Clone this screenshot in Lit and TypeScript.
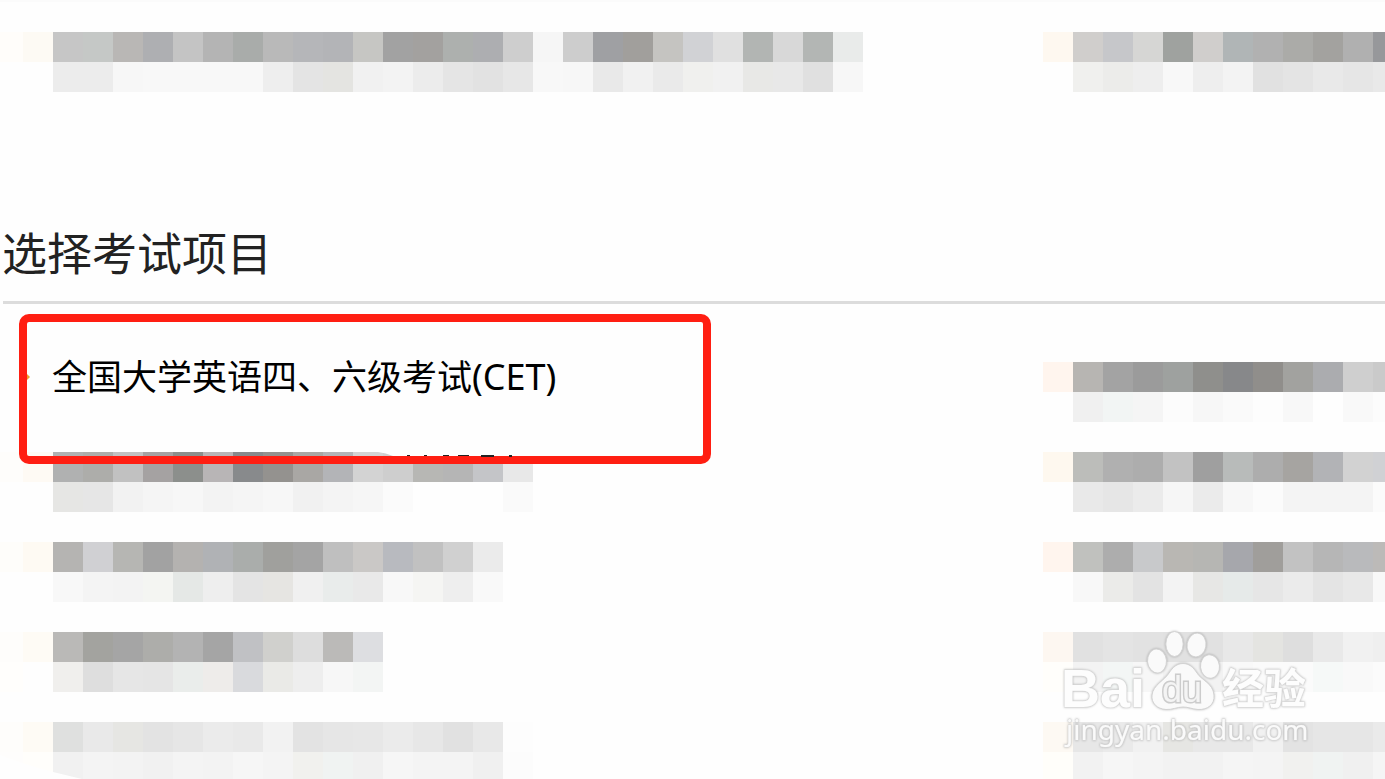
import { LitElement, html, css } from "lit";
import { customElement, property } from "lit/decorators.js";

interface Mosaic {
  top: string;
  bottom: string;
}

const BLANK = "fefefe";

const headerLeft: Mosaic = {
  top: "fffdfa fdfaf4 c6c6c6 c5c8c6 b9b7b5 aeafb2 c4c4c4 b4b4b4 a9acaa b9b9b9 b5b6b9 b3b4b7 c6c6c3 a2a2a2 a3a19f adb0ae adaeb1 cecece f6f6f6 cdcdcd 9fa0a3 a19f9c c5c4c1 d1d2d5 e0e0e0 b2b5b3 d8d8d8 b3b6b4 e9ebea",
  bottom:
    "fefefe fefefe ececec ececec f7f7f7 f8f8f8 f8f8f8 f8f8f8 f8f8f8 eeeeee e4e4e4 e4e4e1 f1f1f1 f3f3f3 ececec e5e5e5 e2e2e2 e7e7e7 f8f8f8 f7f7f7 e9e9e9 f1f1f1 eaeaea f0f0ee f1f1f1 e8e8e6 e8e8e8 e0e0e0 f7f7f7",
};

const headerRight: Mosaic = {
  top: "fef8f0 d0cecc c6c7ca d6d6d4 9fa29f d0cecc b0b5b6 b1b1b1 ababa8 a3a29f b0b0b0 97989b",
  bottom: "fefefe f0f0ee ececea eeeeee f8f8f8 eeeeee f3f3f3 e1e1e1 e4e4e4 e9e9e9 e6e6e6 e9e9e9",
};

const leftRows: Mosaic[] = [
  {
    top: "fefdfb fefaf4 b0b1b1 adadaa c1c1c1 a5a2a2 8c8f8c b8b5b6 888a8c 94928f a9a7a4 b3b4b7 d3d3d3 cecece b7b7b4 b5b5b5 c4c5c8 e8e8e8",
    bottom:
      "fefefe fefefe e6e6e4 e6e6e6 f2f2f2 f5f5f5 f7f7f7 f3f3f3 f5f5f5 f7f7f7 f1f1f1 f4f4f4 f6f6f6 fbfbfb fefefe fefefe fefefe fafafa",
  },
  {
    top: "fefdfa fefaf3 b5b4b2 d0d0d3 b6b6b3 a2a2a2 b4b2b0 b0b2b5 aaadab a0a09d a4a4a4 bfbfbf cac8c6 b8babf c1c1c1 d0d0d0 ebebeb",
    bottom:
      "fefefe fefefe f8f8f8 f4f4f4 f3f3f3 f4f5f2 e5e8e6 eeeeee e4e4e4 e6e5e2 f0f0f0 e9eceb e9e9e9 f8f8f8 f5f5f3 eeeeee f9f9f9",
  },
  {
    top: "fefdfb fefbf5 bab9b7 a3a39f a5a5a5 adadaa b3b3b3 a5a5a5 c0c1c4 d0d0cd dddddd bbbab8 dddee1",
    bottom:
      "fffefc fefefe f0efed dedede e6e6e6 e5e5e5 eaedeb eeecea d9dadd eaeae7 eeeeee f7f7f7 f3f5f4",
  },
  {
    top: "fefdfb fefbf5 dfe0df e9e9e9 e6e6e3 e3e3e3 e6e6e6 ebebeb e9e9e9 f2f2f2 e3e3e3 e6e6e6 e7e7e7 ebebeb e7e7e7 e1e1e1 e8e8e8 fdfdfd",
    bottom:
      "fefdfc fffefb f1f1f1 f4f4f4 f3f3f3 f1f1f1 f4f4f4 f3f3f3 f6f6f6 f4f4f4 f1f1ee f0f3f2 f0f0f0 f6f6f6 f4f4f4 f4f4f4 f0f0f0 fcfcfc",
  },
];

const rightRows: Mosaic[] = [
  {
    top: "fff5ee b7b5b2 a3a3a3 9b9b9b 9ea19f 8f8f8c 87888a 908e8b a2a29f abacaf cfcfcf cacaca",
    bottom: "fefefe f0f0f0 f2f5f4 f5f5f5 fcfcfc f7f7f7 fafafa fdfdfd f8f8f8 fefefe f9f9f9 fcfcfc",
  },
  {
    top: "fef8ef bcbdba b0b0b0 adadad c2c2c2 9f9f9f b8bbba adadad a6a4a1 b2b3b6 d2d2d2 d0d1d4",
    bottom: "fefefe e9e9e9 e6e6e6 ebebeb f6f6f6 ebebeb f7f7f7 fbfbfb f4f4f4 f4f4f4 f4f4f4 fbfbfb",
  },
  {
    top: "fff5ee c0c1be adadad c8c9cb b9b7b3 b6b6b3 a6a7ac a09e9b c2c2c2 b6b6b6 b9babc bcbab8",
    bottom: "fefefe f8f8f8 ebebe9 e3e3e3 f3f3f3 e7e7e5 e6eae9 e6e6e6 ebebeb e4e4e4 e8e8e8 f8f8f8",
  },
  {
    top: "fdf7f1 e1e1e1 e4e4e4 e2e2e2 e1e1e1 e1e1e1 e8e8e8 e4e4e1 dedede e9e9e9 f1f1f1 efefef",
    bottom: "fffefb f3f3f3 f3f6f5 f7f7f7 f2f2f2 f2f2f2 f9f9f9 fbfbfb fbfbfb f6f9f8 f9f9f9 fbfbfb",
  },
  {
    top: "fdf9f3 e7e7e7 eaeaea f1f1f1 e6e6e3 e8e8e8 e8e8e8 f1f1f1 e3e3e3 e6e6e6 e6e6e6 eaeaea",
    bottom: "fffefa f2f2f2 f6f6f6 f4f4f4 f2f2f2 f2f2f2 f5f5f5 f4f4f4 f1f1ef f0f3f2 f0f0f0 f5f5f5",
  },
];

/** A redacted entry: two strips of flat 30px tiles. */
@customElement("mosaic-entry")
class MosaicEntry extends LitElement {
  @property({ attribute: false }) data: Mosaic = { top: BLANK, bottom: BLANK };
  @property({ type: Boolean, reflect: true }) narrow = false;

  static styles = css`
    :host {
      display: block;
      overflow: hidden;
    }
    .strip {
      display: flex;
      height: 30px;
    }
    .tile {
      flex: 0 0 30px;
    }
    :host([narrow]) .tile:first-child {
      flex-basis: 23px;
    }
  `;

  private strip(colours: string) {
    return html`<div class="strip">
      ${colours
        .split(" ")
        .map((c) => html`<span class="tile" style="background:#${c}"></span>`)}
    </div>`;
  }

  render() {
    return html`${this.strip(this.data.top)}${this.strip(this.data.bottom)}`;
  }
}

/** Translucent site mark in the lower right corner. */
@customElement("site-mark")
class SiteMark extends LitElement {
  static styles = css`
    :host {
      display: block;
    }
    svg {
      display: block;
      overflow: visible;
      filter: drop-shadow(0 0 1px rgba(0, 0, 0, 0.25));
    }
    .shape {
      fill: #fafafa;
      stroke: #d2d2d2;
      stroke-width: 1;
    }
    text {
      fill: #fdfdfd;
      stroke: #d8d8d8;
      stroke-width: 1px;
      paint-order: stroke;
    }
    .brand {
      font: 700 54px "Liberation Sans", sans-serif;
    }
    .inner {
      font: 400 36px "Liberation Sans", sans-serif;
      fill: #f4f4f4;
      stroke: #cccccc;
      stroke-width: 3px;
    }
    .han {
      font: 700 42px "Noto Sans CJK SC", sans-serif;
    }
    .domain {
      font: 400 28px "Noto Sans", sans-serif;
      fill: #fafafa;
      stroke: #dadada;
    }
  `;

  render() {
    return html`<svg width="250" height="124" viewBox="0 0 250 124" role="img" aria-label="Baidu 经验">
      <text class="brand" x="-1" y="78">Bai</text>
      <ellipse class="shape" cx="95" cy="32" rx="9.5" ry="12" transform="rotate(-4 95 32)" />
      <ellipse class="shape" cx="112.500" cy="15" rx="8.700" ry="12.500" />
      <ellipse class="shape" cx="134.500" cy="16" rx="9.500" ry="12" transform="rotate(9 134.5 16)" />
      <ellipse class="shape" cx="148" cy="37.500" rx="9.500" ry="11.800" transform="rotate(-6 148 37.5)" />
      <path
        class="shape"
        d="M121 34.500 C127 34.500 131 38 135 44 C139 51 151 54 152 66 C153 76 145 81 136 80.500 C130 80 126 78 121 78 C115 78 110 81 104 80.500 C95 80 89 74 90 66 C91 56 103 51 107 44 C111 38 115 34.500 121 34.500 Z"
      />
      <text class="inner" x="100" y="73">du</text>
      <text class="han" x="160" y="75">经验</text>
      <text class="domain" x="4" y="111">jingyan.baidu.com</text>
    </svg>`;
  }
}

@customElement("app-root")
class AppRoot extends LitElement {
  static styles = css`
    :host {
      display: block;
      position: relative;
      height: 100vh;
      overflow: hidden;
      background: #fefefe;
      border-top: 2px solid #fbfbfb;
      box-sizing: border-box;
      font-family: "Noto Sans", "Noto Sans CJK SC", sans-serif;
    }
    .columns {
      display: grid;
      grid-template-columns: 1043fr 342fr;
      padding-top: 30px;
    }
    .title {
      margin: 130px 0 0 3px;
      padding-bottom: 19px;
      border-bottom: 3px solid #dcdcdc;
      font-family: "Noto Sans CJK SC", sans-serif;
      font-size: 45px;
      font-weight: 400;
      line-height: 60px;
      color: #222;
    }
    .title span {
      margin-left: -1px;
    }
    .exams {
      position: relative;
      padding-top: 58px;
    }
    .list {
      display: flex;
      flex-direction: column;
      gap: 30px;
      margin: 0;
      padding: 0;
      list-style: none;
      min-width: 0;
    }
    .item {
      height: 60px;
    }
    .exam {
      display: flex;
      align-items: center;
      font-size: 35px;
      line-height: 30px;
      color: #000;
      text-decoration: none;
    }
    .latin {
      font-size: 36px;
    }
    .bullet {
      width: 6px;
      height: 6px;
      margin: 0 22px 0 24px;
      background: #f0a030;
      clip-path: polygon(50% 0, 100% 50%, 50% 100%, 0 50%);
    }
    .edge {
      position: absolute;
      left: 370px;
      top: 146px;
    }
    .corner {
      position: absolute;
      left: 0;
      bottom: 0;
    }
    .frame {
      position: absolute;
      left: 19px;
      top: 10px;
      width: 676px;
      height: 134px;
      border: 8px solid #ff1e12;
      border-radius: 10px;
    }
    site-mark {
      position: absolute;
      right: 73px;
      bottom: 26px;
    }
  `;

  render() {
    return html`
      <div class="columns">
        <mosaic-entry narrow .data=${headerLeft}></mosaic-entry>
        <mosaic-entry .data=${headerRight}></mosaic-entry>
      </div>
      <h2 class="title"><span>选择考试项目</span></h2>
      <div class="columns exams">
        <ul class="list">
          <li class="item">
            <a class="exam" href="#cet"
              ><i class="bullet"></i>全国大学英语四、六级考试<span class="latin">(CET)</span></a
            >
          </li>
          ${leftRows.map(
            (row) => html`<li class="item"><mosaic-entry narrow .data=${row}></mosaic-entry></li>`
          )}
        </ul>
        <ul class="list">
          ${rightRows.map(
            (row) => html`<li class="item"><mosaic-entry .data=${row}></mosaic-entry></li>`
          )}
        </ul>
        <div class="frame"></div>
        <svg class="edge" width="170" height="7" aria-hidden="true">
          <path d="M8 2 Q16 3 23 6 H170 V0 H8 Z" fill="#fefefe" />
          <path
            d="M37 5h3v1h-3z M54 5h3v1h-3z M73 5h6v1h-6z M88 5h11v1h-11z M111 5h13v2h-13z M139 5h3v2h-3z"
            fill="#222"
          />
        </svg>
      </div>
      <svg class="corner" width="82" height="24" aria-hidden="true">
        <path d="M0 0 Q26 10 53 17 L82 24 H0 Z" fill="#fefefe" />
      </svg>
      <site-mark></site-mark>
    `;
  }
}
